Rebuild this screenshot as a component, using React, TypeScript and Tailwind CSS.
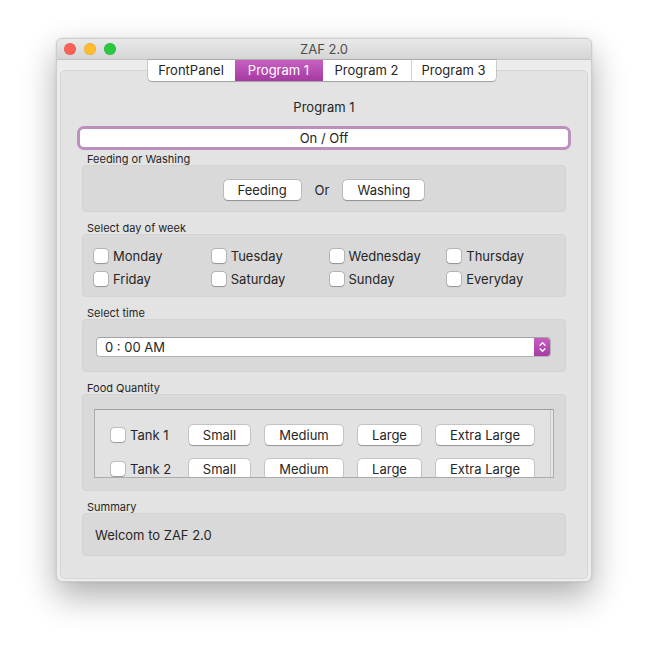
import React from 'react';

const FONT = "font-['Inter','Liberation_Sans',sans-serif]";

const btn =
  'h-[20px] pt-px bg-white rounded-[4px] text-[13px] leading-none text-[#262626] flex items-center justify-center shadow-[0_0_0_0.5px_rgba(0,0,0,0.22),0_0.5px_1px_rgba(0,0,0,0.25)]';

const Checkbox = () => (
  <span className="w-[14px] h-[14px] shrink-0 bg-white rounded-[3px] shadow-[0_0_0_0.5px_rgba(0,0,0,0.3),0_0.5px_1px_rgba(0,0,0,0.2)]" />
);

const Label = ({ text, first }: { text: string; first?: boolean }) => (
  <div className={`h-[14px] pt-px leading-[14px] text-[11px] pl-[5px] text-[#262626] ${first ? 'mt-[4px]' : 'mt-[8px]'}`}>
    {text}
  </div>
);

const days = ['Monday', 'Tuesday', 'Wednesday', 'Thursday', 'Friday', 'Saturday', 'Sunday', 'Everyday'];
const tabs = [
  { name: 'FrontPanel', w: 'w-[87px]' },
  { name: 'Program 1', w: 'w-[88px]', active: true },
  { name: 'Program 2', w: 'w-[88px]' },
  { name: 'Program 3', w: 'w-[85px]' },
];
const sizes = [
  { name: 'Small', w: 'w-[61px]' },
  { name: 'Medium', w: 'w-[78px]' },
  { name: 'Large', w: 'w-[63px]' },
  { name: 'Extra Large', w: 'w-[98px]' },
];

const TankRow = ({ n }: { n: number }) => (
  <div className="h-[20px] flex items-center">
    <div className="w-[78px] flex items-center gap-[5px] text-[13px] text-[#262626]">
      <Checkbox />
      <span className="pt-px">Tank {n}</span>
    </div>
    <div className="flex gap-[15px]">
      {sizes.map((s) => (
        <div key={s.name} className={`${btn} ${s.w}`}>
          {s.name}
        </div>
      ))}
    </div>
  </div>
);

export default function App() {
  return (
    <div className={`w-full h-[656px] bg-white pt-[38px] pl-[56px] ${FONT}`}>
      <div className="w-[536px] h-[544px] rounded-[6px] bg-[#ececec] border border-[#cdcdcd] shadow-[0_14px_34px_rgba(0,0,0,0.32),0_0_2px_rgba(0,0,0,0.15)] flex flex-col overflow-hidden">
        {/* title bar */}
        <div className="h-[21px] shrink-0 grid grid-cols-[1fr_auto_1fr] items-center border-b border-[#c4c4c4] bg-linear-to-b from-[#e9e9e9] to-[#d5d5d5]">
          <div className="flex items-center gap-[8px] pl-[7px]">
            <span className="w-[12px] h-[12px] rounded-full bg-[#fe5f57] shadow-[inset_0_0_0_0.5px_rgba(0,0,0,0.12)]" />
            <span className="w-[12px] h-[12px] rounded-full bg-[#febc2e] shadow-[inset_0_0_0_0.5px_rgba(0,0,0,0.12)]" />
            <span className="w-[12px] h-[12px] rounded-full bg-[#28c840] shadow-[inset_0_0_0_0.5px_rgba(0,0,0,0.12)]" />
          </div>
          <div className="pt-px text-[13px] text-[#4d4d4d]">ZAF 2.0</div>
          <div />
        </div>

        {/* body */}
        <div className="flex-1 flex flex-col px-[3px] pb-[2px]">
          <div className="relative z-10 flex justify-center pr-[5px]">
            <div className="flex h-[21px] bg-white rounded-b-[4px] shadow-[0_0_0_0.5px_rgba(0,0,0,0.22),0_0.5px_1px_rgba(0,0,0,0.2)] overflow-hidden">
              {tabs.map((t, i) => (
                <div
                  key={t.name}
                  className={`${t.w} flex items-center justify-center text-[13px] ${
                    t.active
                      ? 'bg-linear-to-b from-[#c860c2] to-[#a53aa1] text-white'
                      : 'text-[#262626]'
                  } ${i > 0 && !t.active && !tabs[i - 1].active ? 'border-l border-[#d4d4d4]' : ''}`}
                >
                  {t.name}
                </div>
              ))}
            </div>
          </div>

          <div className="flex-1 -mt-[11px] rounded-[5px] border border-[#d6d6d6] bg-[#e3e3e3] px-[21px] pt-[28px] text-[#262626]">
            <div className="h-[16px] leading-[16px] text-[13px] text-center">Program 1</div>

            <div className="-mx-[2px] mt-[14px] h-[18px] pt-px bg-white rounded-[4px] ring-[3px] ring-[#bb8fbe] flex items-center justify-center text-[13px]">
              On / Off
            </div>

            <Label text="Feeding or Washing" first />
            <div className="h-[47px] rounded-[4px] bg-[#d9d9d9] border border-[#d3d3d3] flex items-center justify-center gap-[14px] pt-[3px]">
              <div className={`${btn} w-[77px]`}>Feeding</div>
              <span className="pt-px text-[13px]">Or</span>
              <div className={`${btn} w-[81px]`}>Washing</div>
            </div>

            <Label text="Select day of week" />
            <div className="h-[63px] rounded-[4px] bg-[#d9d9d9] border border-[#d3d3d3] pl-[11px] pt-[14px]">
              <div className="grid grid-cols-4 gap-y-[9px]">
                {days.map((d) => (
                  <div key={d} className="h-[14px] flex items-center gap-[5px] text-[13px]">
                    <Checkbox />
                    <span className="pt-px">{d}</span>
                  </div>
                ))}
              </div>
            </div>

            <Label text="Select time" />
            <div className="h-[53px] rounded-[4px] bg-[#d9d9d9] border border-[#d3d3d3] pl-[13px] pr-[14px] pt-[17px]">
              <div className="h-[20px] flex bg-white rounded-[4px] border border-[#b3b3b3] border-t-[#a2a2a2] overflow-hidden">
                <div className="flex-1 flex items-center pl-[8px] pt-px text-[13px]">0 : 00 AM</div>
                <div className="w-[17px] -my-px -mr-px bg-linear-to-b from-[#c860c2] to-[#a53aa1] rounded-r-[4px] flex items-center justify-center">
                  <svg width="17" height="20" viewBox="0 0 17 20" fill="none">
                    <path d="M6 8.2 L8.5 5.7 L11 8.2" stroke="white" strokeWidth="1.3" strokeLinecap="round" strokeLinejoin="round" />
                    <path d="M6 11.8 L8.5 14.3 L11 11.8" stroke="white" strokeWidth="1.3" strokeLinecap="round" strokeLinejoin="round" />
                  </svg>
                </div>
              </div>
            </div>

            <Label text="Food Quantity" />
            <div className="h-[97px] rounded-[4px] bg-[#d9d9d9] border border-[#d3d3d3] px-[11px] pt-[14px]">
              <div className="h-[69px] flex border border-[#ababab] border-t-[#9f9f9f] bg-[#e2e2e2] overflow-hidden">
                <div className="flex-1 flex flex-col gap-[14px] pl-[16px] pt-[15px]">
                  <TankRow n={1} />
                  <TankRow n={2} />
                </div>
                <div className="w-[3px] border-l border-[#c9c9c9] bg-[#e6e6e6]" />
              </div>
            </div>

            <Label text="Summary" />
            <div className="h-[43px] rounded-[4px] bg-[#d9d9d9] border border-[#d3d3d3] pl-[12px] pt-[3px] flex items-center text-[13px]">
              Welcom to ZAF 2.0
            </div>
          </div>
        </div>
      </div>
    </div>
  );
}
